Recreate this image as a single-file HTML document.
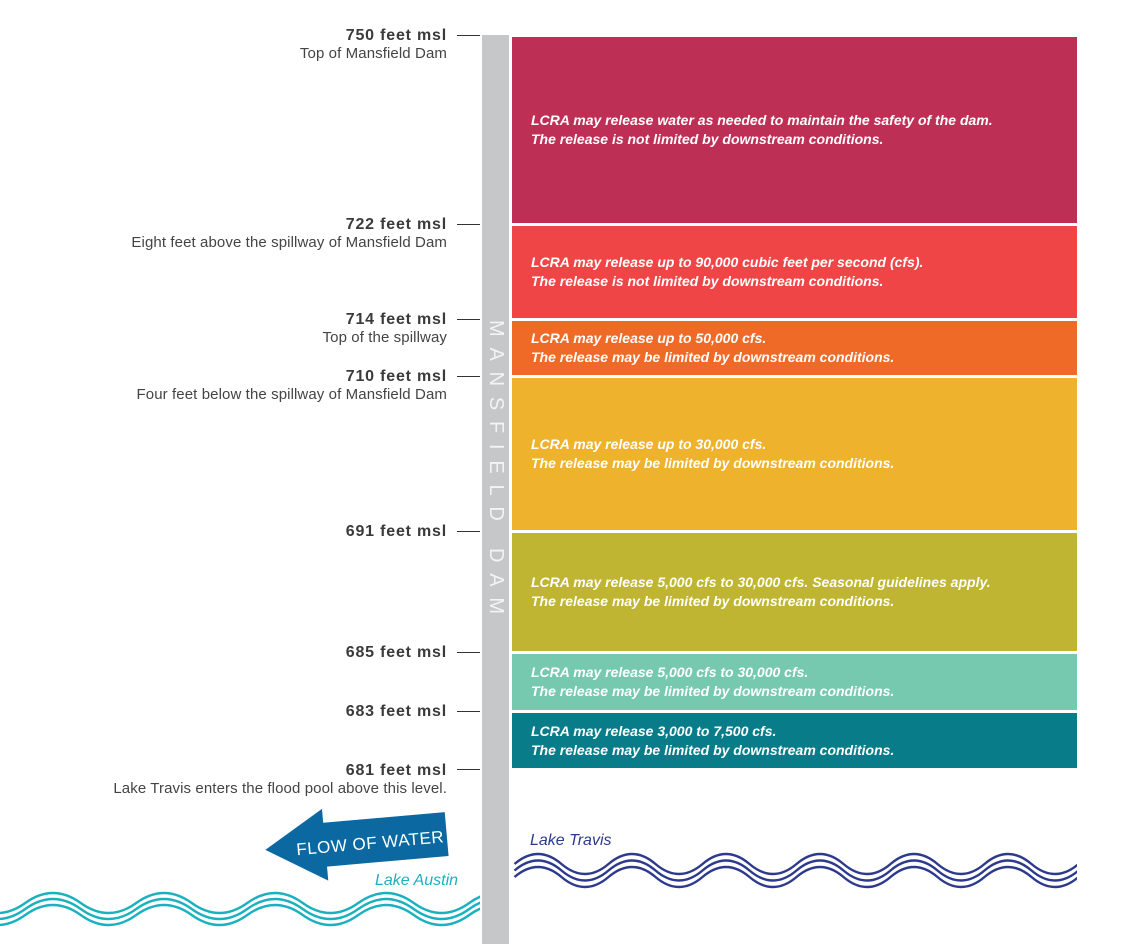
<!DOCTYPE html>
<html><head><meta charset="utf-8"><style>
body{margin:0;width:1132px;height:952px;background:#fff;position:relative;overflow:hidden;font-family:"Liberation Sans",sans-serif}
.bar{position:absolute;left:482px;top:35px;width:27px;height:909px;background:#c6c7c9}
.box{position:absolute;left:512px;width:565px;color:#fff;font-style:italic;font-weight:bold;font-size:14px;line-height:19px;letter-spacing:0px;box-sizing:border-box;padding-left:19px;display:flex;flex-direction:column;justify-content:center}
.tick{position:absolute;left:457px;width:23px;height:1.3px;background:#333}
.lab{position:absolute;right:685px;text-align:right;color:#333;white-space:nowrap}
.lab b{display:block;font-size:16px;line-height:19px;color:#3a3a3a;letter-spacing:0.8px}
.lab span{display:block;font-size:15px;line-height:18px;color:#444;letter-spacing:0.1px}
.vt{position:absolute;left:484px;top:320px;width:24px;writing-mode:vertical-rl;color:#f4f4f4;font-size:20px;letter-spacing:10.8px;font-weight:normal;line-height:24px}
</style></head><body>
<div class="bar"></div>
<div class="vt">MANSFIELD DAM</div>

<div class="box" style="top:37px;height:186px;background:#be2f55"><div>LCRA may release water as needed to maintain the safety of the dam.</div><div>The release is not limited by downstream conditions.</div></div>
<div class="box" style="top:226px;height:92px;background:#ef4546"><div>LCRA may release up to 90,000 cubic feet per second (cfs).</div><div>The release is not limited by downstream conditions.</div></div>
<div class="box" style="top:321px;height:54px;background:#ef6a26"><div>LCRA may release up to 50,000 cfs.</div><div>The release may be limited by downstream conditions.</div></div>
<div class="box" style="top:378px;height:152px;background:#efb22c"><div>LCRA may release up to 30,000 cfs.</div><div>The release may be limited by downstream conditions.</div></div>
<div class="box" style="top:533px;height:118px;background:#c0b533"><div>LCRA may release 5,000 cfs to 30,000 cfs. Seasonal guidelines apply.</div><div>The release may be limited by downstream conditions.</div></div>
<div class="box" style="top:654px;height:56px;background:#76c9af"><div>LCRA may release 5,000 cfs to 30,000 cfs.</div><div>The release may be limited by downstream conditions.</div></div>
<div class="box" style="top:713px;height:55px;background:#087c89"><div>LCRA may release 3,000 to 7,500 cfs.</div><div>The release may be limited by downstream conditions.</div></div>

<div class="tick" style="top:35px"></div>
<div class="tick" style="top:224px"></div>
<div class="tick" style="top:319px"></div>
<div class="tick" style="top:376px"></div>
<div class="tick" style="top:531px"></div>
<div class="tick" style="top:652px"></div>
<div class="tick" style="top:711px"></div>
<div class="tick" style="top:769px"></div>

<div class="lab" style="top:26px"><b>750 feet msl</b><span>Top of Mansfield Dam</span></div>
<div class="lab" style="top:215px"><b>722 feet msl</b><span>Eight feet above the spillway of Mansfield Dam</span></div>
<div class="lab" style="top:310px"><b>714 feet msl</b><span>Top of the spillway</span></div>
<div class="lab" style="top:367px"><b>710 feet msl</b><span>Four feet below the spillway of Mansfield Dam</span></div>
<div class="lab" style="top:522px"><b>691 feet msl</b></div>
<div class="lab" style="top:643px"><b>685 feet msl</b></div>
<div class="lab" style="top:702px"><b>683 feet msl</b></div>
<div class="lab" style="top:761px"><b>681 feet msl</b><span>Lake Travis enters the flood pool above this level.</span></div>

<svg width="1132" height="952" style="position:absolute;left:0;top:0">
<defs><clipPath id="ca"><rect x="0" y="850" width="480" height="100"/></clipPath>
<clipPath id="ct"><rect x="512" y="840" width="565" height="100"/></clipPath></defs>
<g transform="rotate(-5 356 842)">
<polygon points="265,842 325,806 325,820 447,820 447,864 325,864 325,878" fill="#0b68a0"/>
<text x="296" y="850" fill="#fff" font-family="Liberation Sans" font-size="17" letter-spacing="0.5">FLOW OF WATER</text>
</g>
<text x="375" y="885" fill="#1ab1bf" font-family="Liberation Sans" font-style="italic" font-size="16">Lake Austin</text>
<text x="530" y="845" fill="#2d3a8c" font-family="Liberation Sans" font-style="italic" font-size="16">Lake Travis</text>
<g fill="none" stroke="#1ab1bf" stroke-width="2.4" clip-path="url(#ca)">
<path d="M-30.25,903 q27.75,20 55.5,0 t55.5,0 t55.5,0 t55.5,0 t55.5,0 t55.5,0 t55.5,0 t55.5,0 t55.5,0 t55.5,0"/>
<path d="M-30.25,909 q27.75,20 55.5,0 t55.5,0 t55.5,0 t55.5,0 t55.5,0 t55.5,0 t55.5,0 t55.5,0 t55.5,0 t55.5,0"/>
<path d="M-30.25,915 q27.75,20 55.5,0 t55.5,0 t55.5,0 t55.5,0 t55.5,0 t55.5,0 t55.5,0 t55.5,0 t55.5,0 t55.5,0"/>
</g>
<g fill="none" stroke="#2d3a8c" stroke-width="2.4" clip-path="url(#ct)">
<path d="M514.5,864 q23.5,-20 47,0 t47,0 t47,0 t47,0 t47,0 t47,0 t47,0 t47,0 t47,0 t47,0 t47,0 t47,0 t47,0"/>
<path d="M514.5,870.5 q23.5,-20 47,0 t47,0 t47,0 t47,0 t47,0 t47,0 t47,0 t47,0 t47,0 t47,0 t47,0 t47,0 t47,0"/>
<path d="M514.5,877 q23.5,-20 47,0 t47,0 t47,0 t47,0 t47,0 t47,0 t47,0 t47,0 t47,0 t47,0 t47,0 t47,0 t47,0"/>
</g>
</svg>
</body></html>
